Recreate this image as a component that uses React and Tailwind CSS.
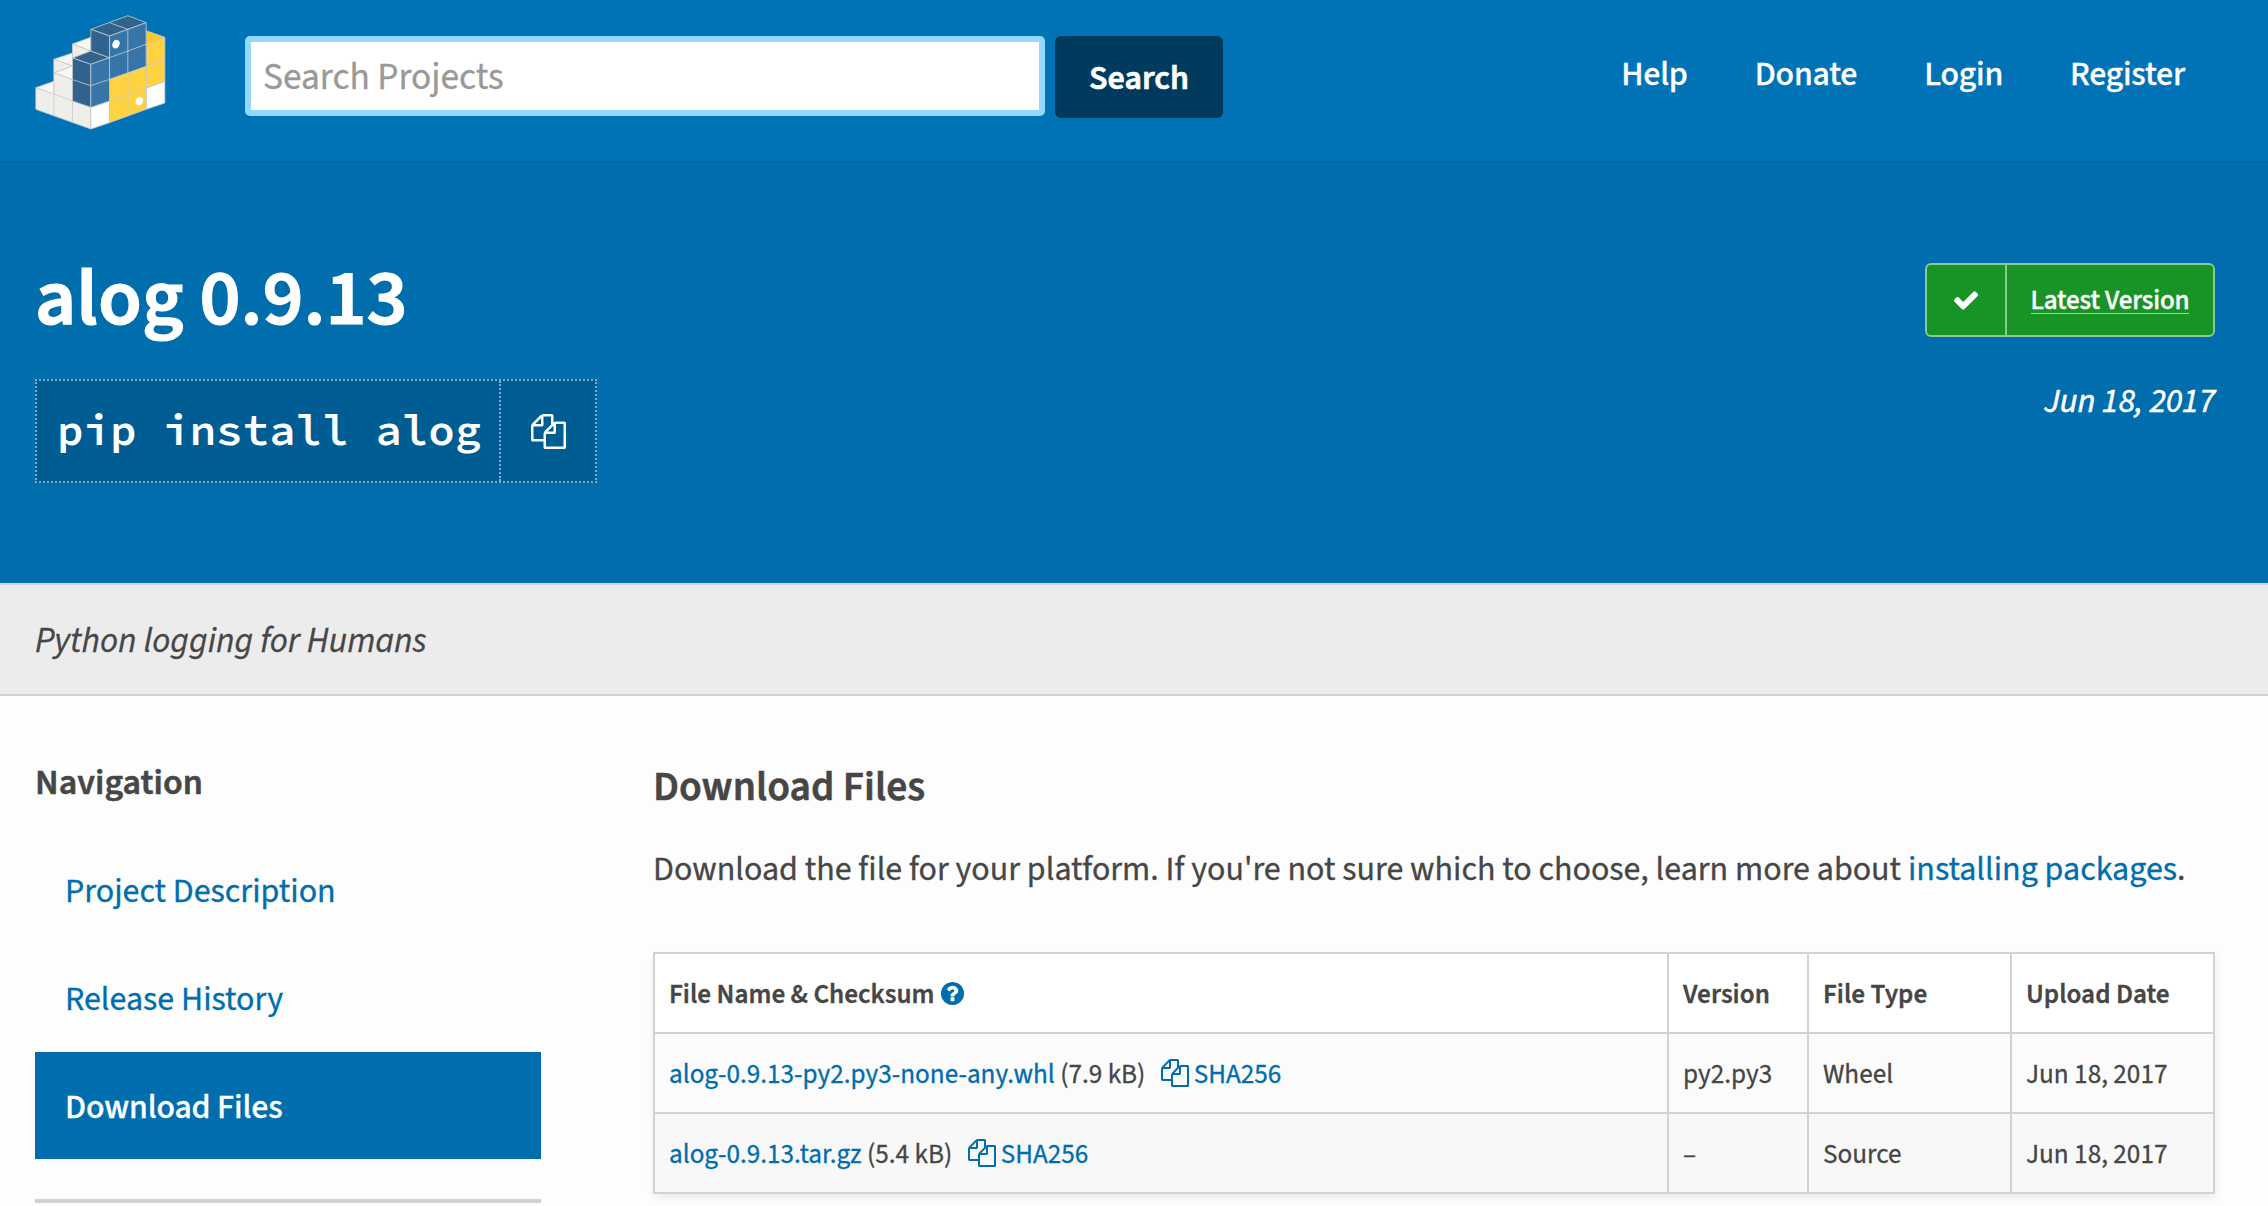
import React from "react";

const copyPath =
  "M1696 384q40 0 68 28t28 68v1216q0 40-28 68t-68 28h-960q-40 0-68-28t-28-68v-288h-544q-40 0-68-28t-28-68v-672q0-40 20-88t48-76l408-408q28-28 76-48t88-20h416q40 0 68 28t28 68v328q68-40 128-40h416zm-544 213l-299 299h299v-299zm-640-384l-299 299h299v-299zm196 647l316-316v-416h-384v416q0 40-28 68t-68 28h-416v640h512v-256q0-40 20-88t48-76zm956 804v-1152h-384v416q0 40-28 68t-68 28h-416v640h896z";
const checkPath =
  "M1671 566q0 40-28 68l-724 724-136 136q-28 28-68 28t-68-28l-136-136-362-362q-28-28-28-68t28-68l136-136q28-28 68-28t68 28l294 295 656-657q28-28 68-28t68 28l136 136q28 28 28 68z";
const helpPath =
  "M1024 1376v-192q0-14-9-23t-23-9h-192q-14 0-23 9t-9 23v192q0 14 9 23t23 9h192q14 0 23-9t9-23zm256-672q0-88-55.5-163t-138.5-116-170-41q-243 0-371 213-15 24 8 42l132 100q7 6 19 6 16 0 25-12 53-68 86-92 34-24 86-24 48 0 85.5 26t37.5 59q0 38-20 61t-68 45q-63 28-115.5 86.5t-52.5 125.5v36q0 14 9 23t23 9h192q14 0 23-9t9-23q0-19 21.5-49.5t54.5-49.5q32-18 49-28.5t46-35 44.5-48 28-60.5 12.5-81zm384 192q0 209-103 385.5t-279.5 279.5-385.5 103-385.5-103-279.5-279.5-103-385.5 103-385.5 279.5-279.5 385.5-103 385.5 103 279.5 279.5 103 385.5z";

function Icon({ d, className }) {
  return (
    <svg viewBox="0 0 1792 1792" fill="currentColor" className={className}>
      <path d={d} />
    </svg>
  );
}

function Logo() {
  return (
    <svg viewBox="105 46 392 345" className="mt-[15px] h-[115px] w-[131px] shrink-0">
      <g stroke="#cccccc" strokeWidth="2.4" strokeLinejoin="round">
        <path fill="#f7f7f4" d="M217 133L272 113V154Z" />
        <path fill="#efeeeb" d="M217 133L272 154L217 175Z" />
        <path fill="#f7f7f4" d="M161 179L217 160V199Z" />
        <path fill="#efeeeb" d="M161 179L217 199L161 220Z" />
        <path fill="#f7f7f4" d="M161 220L217 199V240Z" />
        <path fill="#efeeeb" d="M161 220L217 240V304L161 285Z" />
        <path fill="#f7f7f4" d="M107 264L161 245V285Z" />
        <path fill="#efeeeb" d="M107 264L272 323V388L107 329Z" />
        <path fill="none" d="M161 285V349M217 304V369" />
        <path fill="#ffffff" d="M272 323L328 304V369L272 388Z" />
        <path fill="#ffffff" d="M438 265L494 245V310L438 329Z" />
        <path fill="#ffc91d" d="M438 93L494 113L438 134Z" />
        <path fill="#ffd242" d="M438 134L494 113V245L438 265V329L328 369V239L438 200Z" />
        <path fill="none" d="M328 304L438 265V200L494 180M383 219V349M438 265V200" />
        <path fill="#30648f" d="M217 175L272 154L328 174L272 194Z" />
        <path fill="#30648f" d="M217 175L272 194V323L217 304Z" />
        <path fill="#30648f" d="M272 89L383 48L438 69L328 109Z" />
        <path fill="#30648f" d="M272 89L328 109V174L272 154Z" />
        <path
          fill="#3775a9"
          d="M272 194L328 174V109L438 69V200L328 239V304L272 323Z"
        />
        <path
          fill="none"
          d="M328 69L383 89V219M328 174V239M217 240L272 258L328 239M328 174L438 134"
        />
      </g>
      <ellipse cx="347.5" cy="133.5" rx="10.5" ry="13" fill="#fff" transform="rotate(24 347.5 133.5)" />
      <ellipse cx="417.5" cy="304" rx="10.5" ry="13" fill="#fff" transform="rotate(24 417.5 304)" />
    </svg>
  );
}

const headerLinks = ["Help", "Donate", "Login", "Register"];

const files = [
  { name: "alog-0.9.13-py2.py3-none-any.whl", size: "(7.9 kB)", version: "py2.py3", type: "Wheel", date: "Jun 18, 2017" },
  { name: "alog-0.9.13.tar.gz", size: "(5.4 kB)", version: "–", type: "Source", date: "Jun 18, 2017" },
];

function Header() {
  return (
    <header className="flex h-[163px] items-start border-b-2 border-[#0069a5] bg-[#0073b7] pl-[35px] pr-[83px]">
      <Logo />
      <form className="ml-[79px] mt-9 flex items-start gap-2.5">
        <input
          type="text"
          placeholder="Search Projects"
          className="h-20 w-[800px] rounded-[5px] border-[6px] border-[#93d7ff] bg-white px-3 pt-[3px] text-[37.4px] text-[#464646] outline-none [-webkit-text-stroke:0.3px] placeholder:text-[#999999]"
        />
        <button
          type="button"
          className="h-[82px] w-[168px] rounded-[6px] border-2 border-[#003755] bg-[#003b5e] pt-[2px] font-semibold text-white [-webkit-text-stroke:0.6px]"
        >
          Search
        </button>
      </form>
      <nav className="ml-auto mt-[50px] flex gap-[67px] font-medium leading-[50px] tracking-[-0.2px] text-white [-webkit-text-stroke:0.3px]">
        {headerLinks.map((l) => (
          <a key={l}>{l}</a>
        ))}
      </nav>
    </header>
  );
}

function Hero() {
  return (
    <section className="flex h-[420px] items-start justify-between bg-[#006dad] pl-[35px] pr-[53px] text-white">
      <div className="pt-[88px]">
        <h1 className="text-[80px] font-semibold leading-[96px] [-webkit-text-stroke:1.2px]">alog 0.9.13</h1>
        <div className="mt-8 flex h-[104px] w-[562px] border-2 border-dotted border-[#7faecb] bg-[#005d93]">
          <code className="flex w-[464px] items-center whitespace-pre border-r-2 border-dotted border-[#7faecb] pb-[2px] pl-5 font-['Source_Code_Pro','Liberation_Mono',monospace] text-[44.2px] font-semibold leading-none">
            pip install alog
          </code>
          <span className="flex flex-1 items-center justify-center pl-px">
            <Icon d={copyPath} className="size-[35px]" />
          </span>
        </div>
      </div>
      <div className="flex flex-col items-end pt-[100px]">
        <div className="flex h-[74px] w-[290px] rounded-[6px] border-2 border-[#8bc990] bg-[#189427]">
          <span className="flex w-20 items-center border-r-2 border-[#8bc990] pl-[25px]">
            <Icon d={checkPath} className="size-7" />
          </span>
          <span className="flex flex-1 items-center justify-center">
            <a className="mt-[2px] border-b border-[#a3d4a8] text-[27.2px] font-medium leading-[24px] tracking-[-0.15px] [-webkit-text-stroke:0.4px]">
              Latest Version
            </a>
          </span>
        </div>
        <p className="mt-10 italic leading-[50px] [-webkit-text-stroke:0.6px]">Jun 18, 2017</p>
      </div>
    </section>
  );
}

function Sidebar() {
  return (
    <aside className="w-[506px]">
      <h3 className="mt-[59px] text-[36px] font-semibold leading-[56px] [-webkit-text-stroke:0.5px]">Navigation</h3>
      <ul className="mt-[25px] text-[#006dad] [-webkit-text-stroke:0.3px]">
        <li className="flex h-[108px] items-center pl-[30px] pt-[3px]">Project Description</li>
        <li className="flex h-[108px] items-center pl-[30px] pt-[3px]">Release History</li>
        <li className="flex h-[107px] items-center bg-[#006dad] pl-[30px] pt-[3px] font-medium tracking-[-0.15px] text-white">
          Download Files
        </li>
      </ul>
      <hr className="mt-10 h-1 border-0 bg-[#d2d2d2]" />
    </aside>
  );
}

function FilesTable() {
  return (
    <table className="mt-[57px] w-[1562px] table-fixed border-collapse bg-white text-left text-[27.2px] leading-[40px] shadow-[1px_4px_8px_rgba(0,0,0,0.07)] [-webkit-text-stroke:0.3px] [&_td]:border-2 [&_td]:border-[#d2d2d2] [&_td]:px-3.5 [&_td]:pb-0 [&_td]:pt-[3px] [&_th]:border-2 [&_th]:border-[#d2d2d2] [&_th]:px-3.5 [&_th]:pb-0 [&_th]:pt-[3px] [&_th]:font-semibold">
      <colgroup>
        <col className="w-[1014px]" />
        <col className="w-[140px]" />
        <col className="w-[203px]" />
        <col className="w-[203px]" />
      </colgroup>
      <thead>
        <tr className="h-20">
          <th>
            <span className="flex items-center">
              File Name &amp; Checksum
              <Icon d={helpPath} className="mb-[3px] ml-1 size-[27px] text-[#006dad]" />
            </span>
          </th>
          <th>Version</th>
          <th>File Type</th>
          <th>Upload Date</th>
        </tr>
      </thead>
      <tbody>
        {files.map((f) => (
          <tr key={f.name} className="h-20 odd:bg-[#fbfbfb] even:bg-[#f8f8f8]">
            <td>
              <span className="flex items-center">
                <a className="text-[#006dad]">{f.name}</a>
                <span className="ml-[5.5px]">{f.size}</span>
                <a className="ml-[15.5px] flex items-center text-[#006dad]">
                  <Icon d={copyPath} className="mb-[3px] mr-[5px] size-7" />
                  SHA256
                </a>
              </span>
            </td>
            <td>{f.version}</td>
            <td>{f.type}</td>
            <td>{f.date}</td>
          </tr>
        ))}
      </tbody>
    </table>
  );
}

export default function App() {
  return (
    <div className="h-[1206px] w-[2268px] overflow-hidden bg-[#fdfdfd] font-['Source_Sans_3','Noto_Sans_CJK_SC',sans-serif] text-[34px] text-[#464646]">
      <Header />
      <Hero />
      <div className="flex h-[113px] items-center border-y-2 border-[#d2d2d2] bg-[#ececec] pl-[35px] pt-[3px] text-[35.2px] italic [-webkit-text-stroke:0.3px]">
        Python logging for Humans
      </div>
      <div className="flex items-start gap-28 pl-[35px]">
        <Sidebar />
        <main>
          <h2 className="mt-[61px] text-[41.6px] font-semibold leading-[60px] [-webkit-text-stroke:0.5px]">Download Files</h2>
          <p className="mt-7 whitespace-nowrap leading-[50px] [-webkit-text-stroke:0.3px]">
            Download the file for your platform. If you're not sure which to choose, learn more about{" "}
            <a className="text-[#006dad]">installing packages</a>.
          </p>
          <FilesTable />
        </main>
      </div>
    </div>
  );
}
